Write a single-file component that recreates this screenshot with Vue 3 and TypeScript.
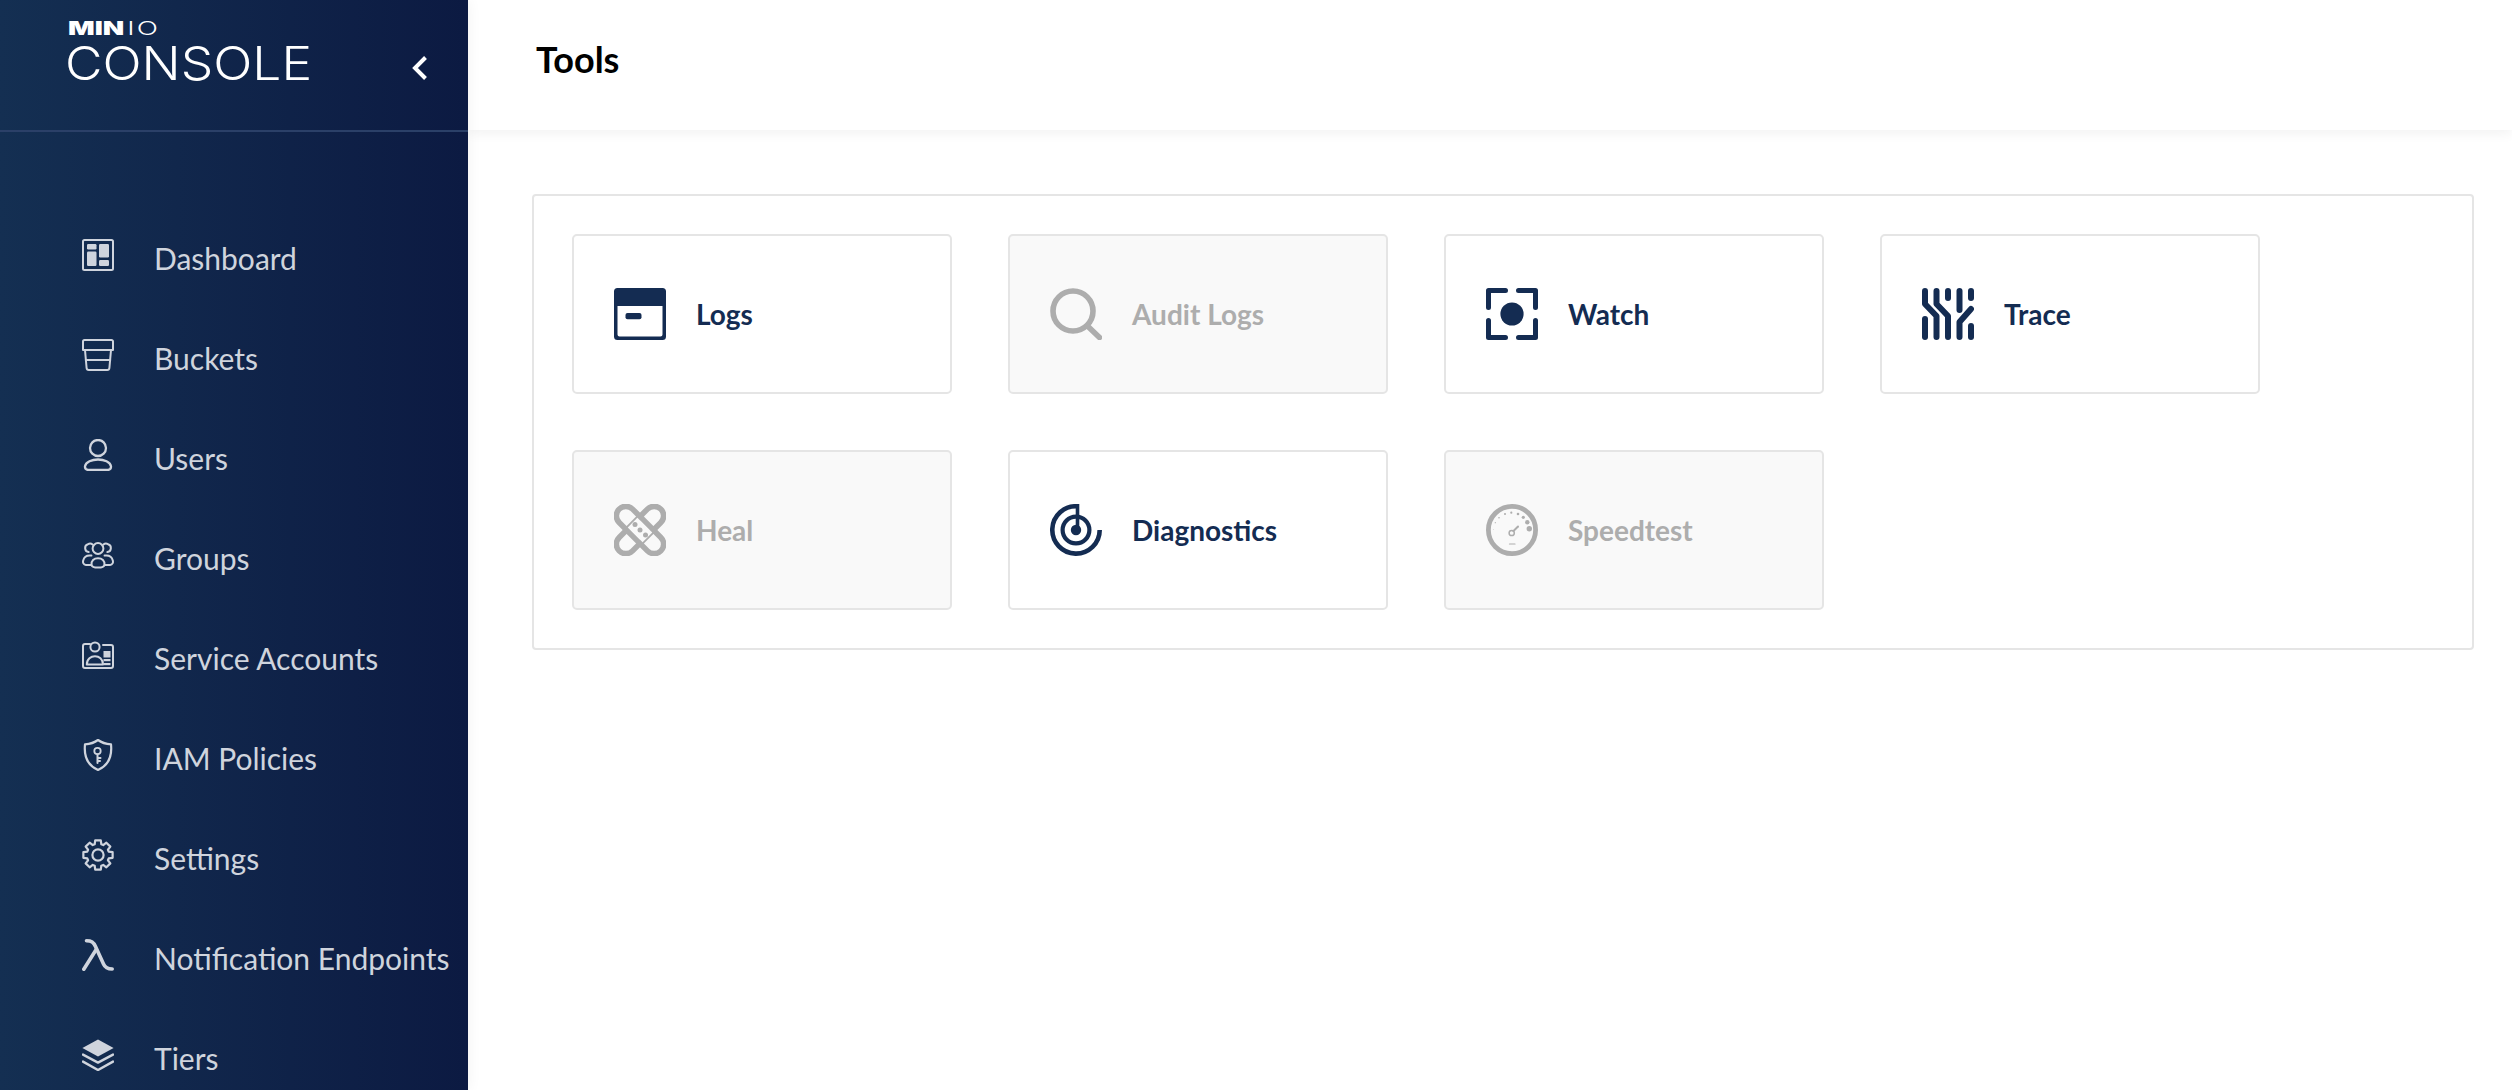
<template>
  <div class="layout">
    <aside class="sidebar">
      <div class="brand">
        <div class="logo">
          <div class="logo-top"><span class="logo-min">MIN</span><span class="logo-io">IO</span></div>
          <div class="logo-console">CONSOLE</div>
        </div>
        <svg class="collapse" width="15" height="24" viewBox="0 0 15 24" fill="none" stroke="#fff" stroke-width="4">
          <path d="M13.5 1.5 L3 12 L13.5 22.5" />
        </svg>
      </div>

      <nav class="menu">
        <div v-for="item in menu" :key="item.label" class="menu-item">
          <svg class="menu-icon" width="32" height="32" viewBox="0 0 32 32" fill="none" stroke="currentColor" stroke-width="2" stroke-linecap="round" stroke-linejoin="round">
            <template v-if="item.icon === 'dashboard'">
              <rect x="1" y="1" width="30" height="30" rx="1.5" />
              <g fill="currentColor" stroke="none">
                <rect x="5" y="5" width="9.5" height="5.5" rx="1.2" />
                <rect x="17" y="5" width="10" height="13.5" rx="1.2" />
                <rect x="5" y="12.5" width="9.5" height="14.5" rx="1.2" />
                <rect x="17" y="21" width="10" height="6" rx="1.2" />
              </g>
            </template>
            <template v-else-if="item.icon === 'buckets'">
              <path d="M2.5 1 H29.5 A1.5 1.5 0 0 1 31 2.5 V11 H1 V2.5 A1.5 1.5 0 0 1 2.5 1 Z" />
              <path d="M3 11 L4.6 29 A2.2 2.2 0 0 0 6.8 31 H25.2 A2.2 2.2 0 0 0 27.4 29 L29 11" />
              <path d="M3.8 21 H28.2" />
            </template>
            <template v-else-if="item.icon === 'users'">
              <circle cx="16" cy="9" r="8" stroke-width="2.3" />
              <path d="M6 31 H26 A3.4 3.4 0 0 0 29 27.4 C28.4 23 22 20.5 16 20.5 S3.6 23 3 27.4 A3.4 3.4 0 0 0 6 31 Z" stroke-width="2.3" />
            </template>
            <template v-else-if="item.icon === 'groups'">
              <g stroke-width="2">
                <circle cx="16" cy="9.5" r="5.4" />
                <path d="M9.5 26 C9 21.5 12 19.2 16 19.2 S23 21.5 22.5 26 C22 28 19 28.6 16 28.6 S10 28 9.5 26 Z" />
                <path d="M10.6 5.6 A4 4 0 0 0 6 5.2 A4 4 0 0 0 6.6 13" />
                <path d="M21.4 5.6 A4 4 0 0 1 26 5.2 A4 4 0 0 1 25.4 13" />
                <path d="M9.4 26 H4 C1.5 25.6 .6 23.6 1.2 21.4 C2 18.2 5 16 9.4 16.6" />
                <path d="M22.6 26 H28 C30.5 25.6 31.4 23.6 30.8 21.4 C30 18.2 27 16 22.6 16.6" />
              </g>
            </template>
            <template v-else-if="item.icon === 'accounts'">
              <g stroke-width="2">
                <path d="M8 5 H3 A2 2 0 0 0 1 7 V27 A2 2 0 0 0 3 29 H29 A2 2 0 0 0 31 27 V8 A2 2 0 0 0 29 6 H21" />
                <circle cx="13" cy="8" r="4.6" />
                <path d="M4.8 25.5 C4.8 20 9 17.2 13 17.2 S21 20 21 25.5 Z" />
              </g>
              <g fill="currentColor" stroke="none">
                <rect x="21.5" y="12" width="7" height="6.5" />
                <rect x="21.5" y="20" width="7" height="2.2" />
                <rect x="21.5" y="24" width="7" height="2.2" />
              </g>
            </template>
            <template v-else-if="item.icon === 'policies'">
              <path d="M16 1 C19.5 3.6 24 5 29 5.4 C30 15 28.6 25.4 16 31 C3.4 25.4 2 15 3 5.4 C8 5 12.5 3.6 16 1 Z" stroke-width="2.2" />
              <circle cx="15.5" cy="12" r="3.2" stroke-width="1.8" />
              <path d="M15.5 15.5 V24 M15.5 19 H18.5 M15.5 22 H18" stroke-width="2" />
            </template>
            <template v-else-if="item.icon === 'settings'">
              <path :d="gearPath" stroke-width="2.2" />
              <circle cx="16" cy="16" r="5.6" stroke-width="2.2" />
            </template>
            <template v-else-if="item.icon === 'lambda'">
              <path d="M4.5 1.8 C9.5 1.8 11.5 3 13.5 7.5 L21.5 25 C23 28.5 25.5 30 30.2 30" stroke-width="3.6" />
              <path d="M14.2 10.5 L1.8 30.2" stroke-width="3.6" />
            </template>
            <template v-else>
              <path d="M16 .6 L31.6 9 L16 17.4 L.4 9 Z" fill="currentColor" stroke="none" />
              <path d="M1 15.6 L16 23.6 L31 15.6" stroke-width="2.4" />
              <path d="M1 22.6 L16 31 L31 22.6" stroke-width="2.4" />
            </template>
          </svg>
          <span class="menu-label">{{ item.label }}</span>
        </div>
      </nav>
    </aside>

    <main class="main">
      <header class="page-header">
        <h1 class="page-title">Tools</h1>
      </header>

      <section class="content">
        <div class="panel">
          <div v-for="tool in tools" :key="tool.label" class="tool" :class="{ disabled: tool.disabled }">
            <svg class="tool-icon" width="52" height="52" viewBox="0 0 52 52" fill="none" stroke="currentColor" stroke-linecap="round">
              <template v-if="tool.icon === 'logs'">
                <path fill-rule="evenodd" fill="currentColor" stroke="none" d="M3.5 0 H48.5 A3.5 3.5 0 0 1 52 3.5 V48.5 A3.5 3.5 0 0 1 48.5 52 H3.5 A3.5 3.5 0 0 1 0 48.5 V3.5 A3.5 3.5 0 0 1 3.5 0 Z M3.5 18 V46.5 A2 2 0 0 0 5.5 48.5 H46.5 A2 2 0 0 0 48.5 46.5 V18 Z" />
                <rect x="11.5" y="25" width="16" height="6.2" rx="2" fill="currentColor" stroke="none" />
              </template>
              <template v-else-if="tool.icon === 'audit'">
                <circle cx="23" cy="23" r="20" stroke-width="5.6" />
                <path d="M37.5 38 L49.5 49.5" stroke-width="5.6" />
              </template>
              <template v-else-if="tool.icon === 'watch'">
                <g stroke-width="5" stroke-linejoin="round">
                  <path d="M2.5 19.5 V2.5 H19.5" />
                  <path d="M32.5 2.5 H49.5 V19.5" />
                  <path d="M49.5 32.5 V49.5 H32.5" />
                  <path d="M19.5 49.5 H2.5 V32.5" />
                </g>
                <circle cx="26" cy="26" r="11.6" fill="currentColor" stroke="none" />
              </template>
              <template v-else-if="tool.icon === 'trace'">
                <g stroke-width="6" stroke-linejoin="round">
                  <path d="M3 3 V16 L14.5 28 V49" />
                  <path d="M3 31 V49" />
                  <path d="M14.5 3 V16 L26 28 V49" />
                  <path d="M26 3 V10" />
                  <path d="M37.5 3 V22" />
                  <path d="M49 3 V10" />
                  <path d="M49 21 L37.5 34 V49" />
                  <path d="M49 38 V49" />
                </g>
              </template>
              <template v-else-if="tool.icon === 'heal'">
                <g stroke-width="5.6">
                  <rect x="-29.5" y="-9.5" width="59" height="19" rx="9.5" transform="translate(26 26) rotate(-45)" />
                  <rect x="-29.5" y="-9.5" width="59" height="19" rx="9.5" transform="translate(26 26) rotate(45)" />
                </g>
                <rect x="-10.5" y="-6.8" width="21" height="13.6" transform="translate(26 26) rotate(45)" fill="#f9f9f9" stroke="none" />
                <g fill="currentColor" stroke="none">
                  <circle cx="21" cy="20.5" r="2.5" />
                  <circle cx="26" cy="26" r="2.5" />
                  <circle cx="31.5" cy="31" r="2.5" />
                </g>
              </template>
              <template v-else-if="tool.icon === 'diagnostics'">
                <path d="M27.5 2.3 A23.7 23.7 0 1 0 49.7 26" stroke-width="4.6" stroke-linecap="butt" />
                <circle cx="26" cy="26" r="13.4" stroke-width="4.2" />
                <path d="M27.5 0 V25" stroke-width="3.6" stroke-linecap="butt" />
                <circle cx="26" cy="26" r="5.2" fill="currentColor" stroke="none" />
              </template>
              <template v-else>
                <circle cx="26" cy="26" r="23.6" stroke-width="4.8" />
                <g fill="currentColor" stroke="none">
                  <circle v-for="dot in speedDots" :key="dot[0]" :cx="dot[0]" :cy="dot[1]" :r="dot[2]" />
                </g>
                <circle cx="25.7" cy="29" r="2.6" stroke-width="1.5" />
                <path d="M27.5 27 L32 22.5" stroke-width="2" />
                <path d="M23.5 40 H29" stroke-width="1.2" />
              </template>
            </svg>
            <span class="tool-label">{{ tool.label }}</span>
          </div>
        </div>
      </section>
    </main>
  </div>
</template>

<script setup lang="ts">
interface MenuItem {
  label: string;
  icon: string;
}

interface Tool {
  label: string;
  icon: string;
  disabled?: boolean;
}

const menu: MenuItem[] = [
  { label: 'Dashboard', icon: 'dashboard' },
  { label: 'Buckets', icon: 'buckets' },
  { label: 'Users', icon: 'users' },
  { label: 'Groups', icon: 'groups' },
  { label: 'Service Accounts', icon: 'accounts' },
  { label: 'IAM Policies', icon: 'policies' },
  { label: 'Settings', icon: 'settings' },
  { label: 'Notification Endpoints', icon: 'lambda' },
  { label: 'Tiers', icon: 'tiers' },
];

const tools: Tool[] = [
  { label: 'Logs', icon: 'logs' },
  { label: 'Audit Logs', icon: 'audit', disabled: true },
  { label: 'Watch', icon: 'watch' },
  { label: 'Trace', icon: 'trace' },
  { label: 'Heal', icon: 'heal', disabled: true },
  { label: 'Diagnostics', icon: 'diagnostics' },
  { label: 'Speedtest', icon: 'speedtest', disabled: true },
];

const speedDots: number[][] = [
  [7.3, 25.3, 0.4],
  [9.3, 18.7, 0.6],
  [13, 13.7, 0.8],
  [19, 10, 1],
  [25.3, 8.7, 1.1],
  [32, 10, 1.3],
  [37.3, 13.3, 1.6],
  [41.3, 18.3, 2.2],
  [43.3, 24.7, 2.7],
];

// eight-toothed gear outline, centred in the 32 box
const gearPath = (() => {
  const teeth = 8;
  const points: string[] = [];
  for (let i = 0; i < teeth; i++) {
    const mid = (i / teeth) * Math.PI * 2 - Math.PI / 2;
    const at = (r: number, off: number) => {
      const a = mid + off;
      return `${(16 + r * Math.cos(a)).toFixed(2)} ${(16 + r * Math.sin(a)).toFixed(2)}`;
    };
    points.push(at(11.2, -0.3), at(14.9, -0.19), at(14.9, 0.19), at(11.2, 0.3));
  }
  return `M${points.join(' L')} Z`;
})();
</script>

<style scoped>
.layout {
  display: flex;
  height: 1090px;
  overflow: hidden;
  background: #fff;
  font-family: Lato, "Noto Sans", sans-serif;
}

.sidebar {
  flex: 0 0 468px;
  background: linear-gradient(90deg, #142f52 0%, #0c1a42 100%);
  color: #cfd4dd;
  box-shadow: 0 0 14px rgba(0, 0, 0, 0.06);
  position: relative;
  z-index: 2;
}

.brand {
  display: flex;
  justify-content: space-between;
  align-items: center;
  height: 130px;
  padding: 0 41px 0 68px;
  border-bottom: 2px solid #2b4068;
}

.logo {
  color: #fff;
  margin-top: -26px;
}

.logo-top {
  display: flex;
  align-items: center;
  height: 16px;
  line-height: 16px;
  font-family: Inter, sans-serif;
  font-size: 19px;
  transform: scaleX(1.47);
  transform-origin: left center;
}

.logo-min {
  font-weight: 900;
}

.logo-io {
  font-weight: 300;
  margin-left: 2px;
  letter-spacing: 1.5px;
}

.logo-console {
  margin-top: 6px;
  margin-left: -3px;
  font-family: Inter, sans-serif;
  font-size: 46px;
  font-weight: 350;
  line-height: 40px;
  transform: scaleX(1.12);
  transform-origin: left center;
}

.collapse {
  margin-top: 6px;
}

.menu {
  display: flex;
  flex-direction: column;
  padding-top: 76px;
}

.menu-item {
  display: flex;
  align-items: center;
  gap: 40px;
  height: 100px;
  padding-left: 82px;
  flex: none;
}

.menu-icon {
  flex: none;
  margin-bottom: 6px;
}

.menu-label {
  font-size: 30px;
  white-space: nowrap;
  line-height: 36px;
}

.main {
  flex: 1;
  min-width: 0;
}

.page-header {
  display: flex;
  align-items: center;
  height: 130px;
  padding-left: 68px;
  background: #fff;
  box-shadow: 0 3px 12px rgba(0, 0, 0, 0.06);
}

.page-title {
  margin: 0;
  margin-top: -13px;
  font-size: 36px;
  font-weight: 700;
  color: #000;
}

.content {
  padding: 64px 38px 0 64px;
}

.panel {
  display: grid;
  grid-template-columns: repeat(4, 380px);
  gap: 56px;
  padding: 38px;
  border: 2px solid #e5e5e5;
  border-radius: 4px;
}

.tool {
  box-sizing: border-box;
  display: flex;
  align-items: center;
  gap: 30px;
  height: 160px;
  padding-left: 40px;
  border: 2px solid #e5e5e5;
  border-radius: 5px;
  color: #142c52;
  background: #fff;
}

.tool.disabled {
  background: #f9f9f9;
  color: #adadad;
}

.tool-icon {
  flex: none;
}

.tool-label {
  font-size: 28px;
  font-weight: 700;
}
</style>

<style>
html,
body {
  margin: 0;
  background: #fff;
}
</style>
